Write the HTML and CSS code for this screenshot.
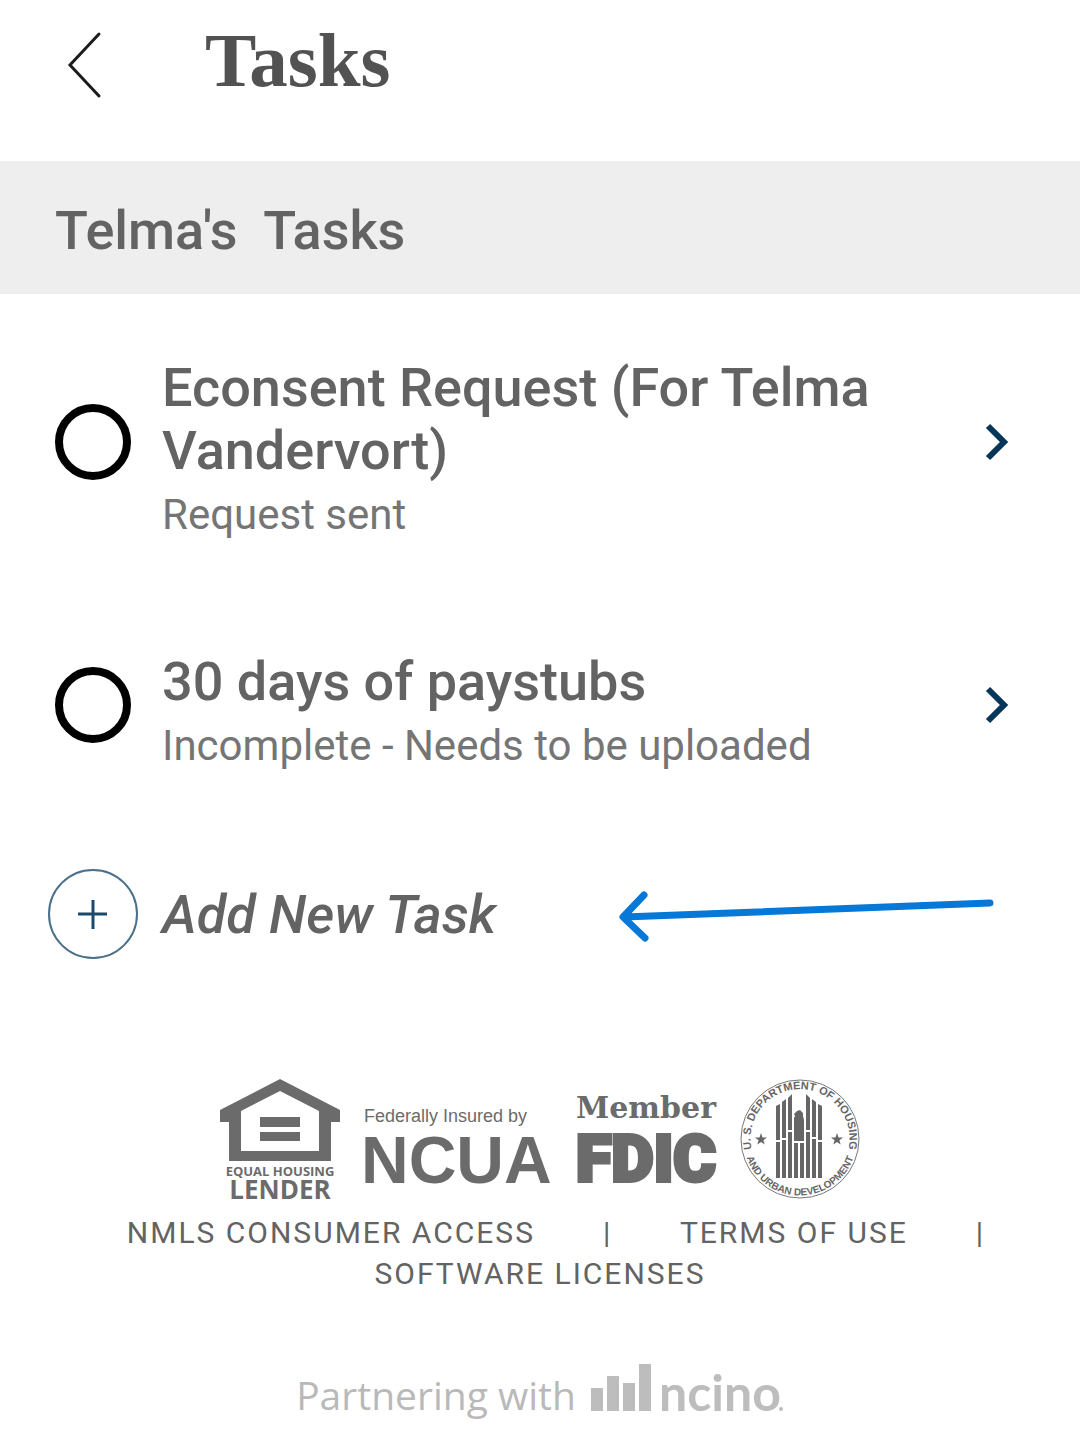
FILE: index.html
```html
<!DOCTYPE html>
<html lang="en">
<head>
    <meta charset="UTF-8">
    <meta name="viewport" content="width=device-width, initial-scale=1.0">
    <title>Tasks</title>
    <link rel="stylesheet" href="styles.css">
</head>
<body>

    <header class="topbar">
        <button class="back" type="button" aria-label="Back">
            <svg width="36" height="68" viewBox="0 0 36 68">
                <path d="M33 3 L4 34 L33 65" fill="none" stroke="#1c1c1c" stroke-width="3" stroke-linecap="round"/>
            </svg>
        </button>
        <h1>Tasks</h1>
    </header>

    <main>
        <h2 class="section-title">Telma's&nbsp; Tasks</h2>

        <ul class="tasks">
            <li class="task">
                <input type="checkbox" class="check" id="task1">
                <div class="task-text">
                    <label class="task-name" for="task1">Econsent Request (For Telma Vandervort)</label>
                    <p class="task-status">Request sent</p>
                </div>
                <a class="open" href="#" aria-label="Open Econsent Request">
                    <svg width="24" height="36" viewBox="0 0 24 36">
                        <path d="M4 2 L20 18 L4 34" fill="none" stroke="#06365a" stroke-width="6"/>
                    </svg>
                </a>
            </li>
            <li class="task">
                <input type="checkbox" class="check" id="task2">
                <div class="task-text">
                    <label class="task-name" for="task2">30 days of paystubs</label>
                    <p class="task-status">Incomplete - Needs to be uploaded</p>
                </div>
                <a class="open" href="#" aria-label="Open 30 days of paystubs">
                    <svg width="24" height="36" viewBox="0 0 24 36">
                        <path d="M4 2 L20 18 L4 34" fill="none" stroke="#06365a" stroke-width="6"/>
                    </svg>
                </a>
            </li>
            <li class="add-row">
                <button class="add" type="button">
                    <svg width="90" height="90" viewBox="0 0 90 90">
                        <circle cx="45" cy="45" r="44" fill="none" stroke="#4b7089" stroke-width="2"/>
                        <path d="M45 31 V60 M30 45 H59" stroke="#1d4a6b" stroke-width="3"/>
                    </svg>
                    <span>Add New Task</span>
                </button>
                <svg class="arrow" width="390" height="90" viewBox="0 0 390 90">
                    <path d="M372 34 L6 48 M26 26 L5 48 L27 69" fill="none" stroke="#0678d7" stroke-width="7" stroke-linecap="round" stroke-linejoin="round"/>
                </svg>
            </li>
        </ul>
    </main>

    <footer class="footer">
        <div class="logos">
            <!-- Equal Housing Lender -->
            <svg width="120" height="120" viewBox="0 0 120 120" fill="#6b6b6b">
                <path fill-rule="evenodd" d="M60 0 L120 31 V43 H111 V82 H9 V43 H0 V31 Z M60 12 L99 32 V72 H21 V32 Z"/>
                <path d="M40 38 H80 V48 H40 Z M40 53 H80 V62 H40 Z"/>
                <text class="ehl" x="60" y="97" font-size="13">EQUAL HOUSING</text>
                <text class="ehl" x="60" y="120" font-size="26">LENDER</text>
            </svg>

            <!-- NCUA -->
            <svg width="188" height="120" viewBox="0 0 188 120" fill="#6b6b6b">
                <text class="sans" x="0" y="43" font-size="18">Federally Insured by</text>
                <text class="sans bold" x="-3" y="104" font-size="66">NCUA</text>
            </svg>

            <!-- FDIC -->
            <svg width="140" height="120" viewBox="0 0 140 120" fill="#6b6b6b">
                <text class="slab" x="70" y="39" font-size="30">Member</text>
                <text class="fdic" x="70" y="102" font-size="65">FDIC</text>
            </svg>

            <!-- HUD seal -->
            <svg width="120" height="120" viewBox="0 0 120 120" fill="#666">
                <circle cx="60" cy="60" r="59" fill="none" stroke="#777" stroke-width="1"/>
                <path id="arcTop" d="M14 78 A49.5 49.5 0 1 1 106 78" fill="none"/>
                <path id="arcBottom" d="M3.5 60 A56.5 56.5 0 0 0 116.5 60" fill="none"/>
                <text class="seal" font-size="11"><textPath href="#arcTop" startOffset="50%">U. S. DEPARTMENT OF HOUSING</textPath></text>
                <text class="seal" font-size="10"><textPath href="#arcBottom" startOffset="50%">AND URBAN DEVELOPMENT</textPath></text>
                <path d="M36 27 L40 25 V61 H36 Z M42 23 L46 20 V59 H42 Z M48 19 L52 15 V51 H48 Z M66 15 L70 19 V51 H66 Z M72 20 L76 23 V58 H72 Z M78 25 L82 27 V61 H78 Z"/>
                <path d="M36 63 H40 V99 H36 Z M42 61 H46 V99 H42 Z M48 53 H52 V99 H48 Z M54 64 H58 V99 H54 Z M60 64 H64 V99 H60 Z M66 53 H70 V99 H66 Z M72 60 H76 V99 H72 Z M78 63 H82 V99 H78 Z"/>
                <path d="M54 62 V39 L55 37 L54 35 L57 32 L60 31 L63 34 V37 L64 41 V62 Z"/>
                <path id="star" d="M21 54 L22.5 58.5 H27 L23.4 61.2 L24.7 65.5 L21 62.9 L17.3 65.5 L18.6 61.2 L15 58.5 H19.5 Z"/>
                <use href="#star" x="76"/>
            </svg>
        </div>

        <nav class="links"><a href="#">NMLS CONSUMER ACCESS</a>       <span class="sep">|</span>       <a href="#">TERMS OF USE</a>       <span class="sep">|</span>       <a href="#">SOFTWARE LICENSES</a></nav>

        <div class="partner">
            <span>Partnering with</span>
            <svg width="194" height="50" viewBox="0 0 194 50" fill="#bdbdbd">
                <path d="M1 24 H13 V47 H1 Z M17 12 H29 V47 H17 Z M33 19 H45 V47 H33 Z M49 0 H61 V47 H49 Z"/>
                <text class="ncino" x="69" y="47" font-size="50">ncino</text>
                <circle cx="191" cy="45" r="2"/>
            </svg>
        </div>
    </footer>

</body>
</html>
```
FILE: styles.css
```css
* {
    box-sizing: border-box;
}

body {
    margin: 0;
    background-color: #fff;
    color: #636363;
    font-family: Roboto, sans-serif;
}

h1, h2, p, ul {
    margin: 0;
    padding: 0;
}

button {
    padding: 0;
    border: none;
    background: none;
    color: inherit;
    font: inherit;
    cursor: pointer;
}

svg {
    display: block;
    flex-shrink: 0;
    overflow: visible;
}

.topbar {
    display: flex;
    align-items: flex-start;
    gap: 103px;
    padding: 16px 66px 57px;
}

.back {
    padding-top: 15px;
}

.topbar h1 {
    color: #525252;
    font-family: "Liberation Serif", serif;
    font-size: 77px;
    font-weight: bold;
    line-height: 88px;
}

.section-title {
    padding: 38px 55px 32px;
    background-color: #eee;
    font-size: 54px;
    font-weight: 500;
    line-height: 63px;
}

.tasks {
    display: flex;
    flex-direction: column;
    gap: 98px;
    padding: 50px 72px 0 48px;
    list-style: none;
}

.task {
    display: flex;
    align-items: center;
    padding-left: 7px;
}

.check {
    appearance: none;
    flex-shrink: 0;
    width: 76px;
    height: 76px;
    margin: 0;
    border: 8px solid #000;
    border-radius: 50%;
    cursor: pointer;
}

.check:checked {
    background-color: #06365a;
}

.task-text {
    flex: 1;
    padding: 12px 72px 0 31px;
}

.task-name {
    display: block;
    font-size: 54px;
    font-weight: 500;
    line-height: 63px;
}

.task-status {
    margin-top: 8px;
    color: #757575;
    font-size: 42px;
    line-height: 50px;
}

.add-row {
    display: flex;
    align-items: center;
    justify-content: space-between;
}

.add {
    display: flex;
    align-items: center;
    gap: 24px;
    font-size: 54px;
    font-style: italic;
    font-weight: 500;
    line-height: 63px;
}

.footer {
    padding: 120px 40px 24px;
}

.logos {
    display: flex;
    flex-wrap: wrap;
    justify-content: center;
    gap: 24px;
}

.ehl {
    font-family: "Open Sans", sans-serif;
    font-weight: bold;
    text-anchor: middle;
}

.sans {
    font-family: "Liberation Sans", sans-serif;
}

.bold {
    font-weight: bold;
}

.slab {
    font-family: "DejaVu Serif", serif;
    font-weight: bold;
    text-anchor: middle;
}

.fdic {
    font-family: Roboto, sans-serif;
    font-weight: 900;
    stroke: #6b6b6b;
    stroke-width: 4px;
    text-anchor: middle;
}

.seal {
    font-family: "Liberation Sans", sans-serif;
    font-weight: bold;
    text-anchor: middle;
}

.links {
    margin-top: 13px;
    font-size: 30px;
    letter-spacing: 2px;
    line-height: 41px;
    text-align: center;
    text-indent: 34px;
    white-space: pre-wrap;
}

.links a {
    color: inherit;
    text-decoration: none;
}

.sep {
    margin: 0 2px;
}

.partner {
    display: flex;
    align-items: flex-start;
    justify-content: center;
    gap: 14px;
    margin-top: 70px;
    color: #b9b9b9;
    font-family: "Open Sans", sans-serif;
    font-size: 39px;
    line-height: 62px;
}

.ncino {
    font-family: Lato, sans-serif;
    font-weight: bold;
}
```
